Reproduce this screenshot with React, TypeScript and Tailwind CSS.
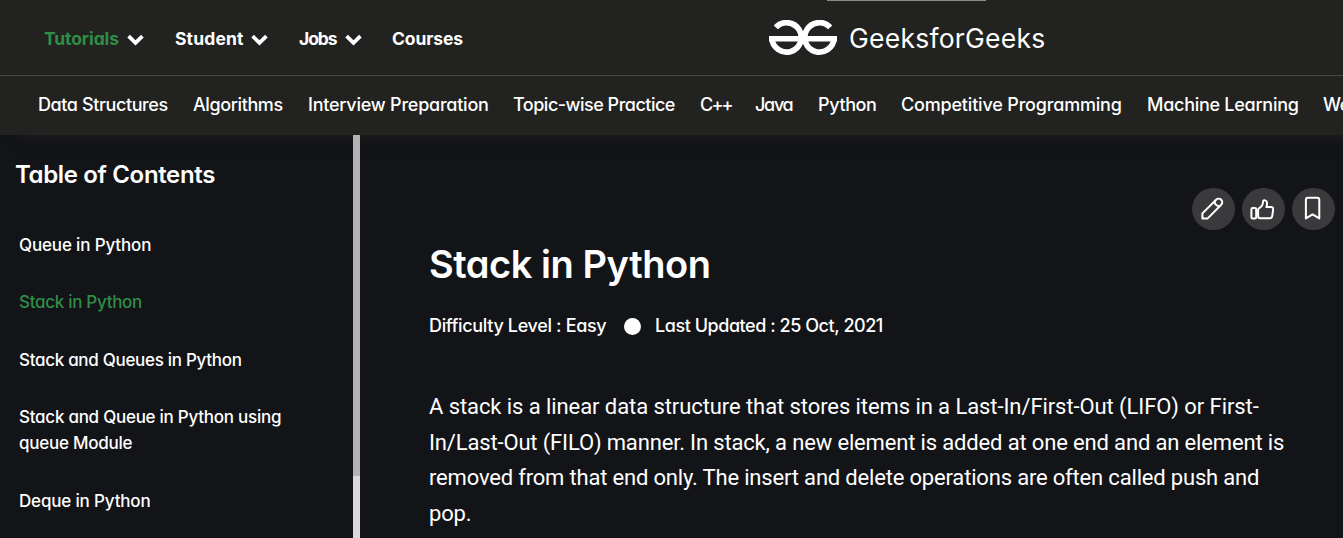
const menus = [
  { label: "Tutorials", slot: "w-[131px]", text: "w-[83px] tracking-[-0.1px] text-[#2f8d46]", arrow: true },
  { label: "Student", slot: "w-[124px]", text: "w-[76px] tracking-[0.15px]", arrow: true },
  { label: "Jobs", slot: "w-[93px]", text: "w-[46px] tracking-[-1.1px]", arrow: true },
  { label: "Courses", slot: "w-[90px]", text: "w-[77px] tracking-[-0.1px]", arrow: false },
];

const topics = [
  { label: "Data Structures", style: "w-[155px] tracking-[-0.4px]" },
  { label: "Algorithms", style: "w-[115px] tracking-[-0.4px]" },
  { label: "Interview Preparation", style: "w-[205px] tracking-[-0.23px]" },
  { label: "Topic-wise Practice", style: "w-[187px] tracking-[-0.5px]" },
  { label: "C++", style: "w-[55px] tracking-[-1.8px]" },
  { label: "Java", style: "w-[63px] tracking-[-1.3px]" },
  { label: "Python", style: "w-[83px] tracking-[-0.4px]" },
  { label: "Competitive Programming", style: "w-[246px] tracking-[-0.18px]" },
  { label: "Machine Learning", style: "w-[176px] tracking-[-0.27px]" },
  { label: "Web Development", style: "w-[177px] tracking-[-0.4px]" },
];

const contents = [
  { lines: ["Queue in Python"], style: "tracking-[-0.15px]" },
  { lines: ["Stack in Python"], style: "tracking-[-0.3px] text-[#2f8d46]" },
  { lines: ["Stack and Queues in Python"], style: "tracking-[-0.3px]" },
  { lines: ["Stack and Queue in Python using", "queue Module"], style: "tracking-[-0.26px]" },
  { lines: ["Deque in Python"], style: "pt-px tracking-[-0.17px]" },
];

const article = [
  { text: "A stack is a linear data structure that stores items in a Last-In/First-Out (LIFO) or First-", style: "tracking-[-0.08px]" },
  { text: "In/Last-Out (FILO) manner. In stack, a new element is added at one end and an element is", style: "tracking-[-0.155px]" },
  { text: "removed from that end only. The insert and delete operations are often called push and", style: "tracking-[-0.18px]" },
  { text: "pop.", style: "tracking-[-0.2px]" },
];

function Chevron() {
  return (
    <svg className="mt-0.5 h-3 w-[17px]" viewBox="0 0 17 12" fill="none" stroke="currentColor" strokeWidth="3.8">
      <path d="M1.6 2.2 8.5 8.8l6.9-6.6" />
    </svg>
  );
}

function Logo() {
  return (
    <svg className="-ml-px h-9 w-[68px]" viewBox="0 0 68 36" fill="none" stroke="white" strokeWidth="5.8">
      <path d="M6.8 7.4A14.7 14.7 0 1 1 2.9 18" />
      <path d="M61.2 7.4A14.7 14.7 0 1 0 65.1 18" />
      <path d="M0 18.7h31M37 18.7h31" strokeWidth="5.4" />
    </svg>
  );
}

function Pencil() {
  return (
    <svg className="mr-[3px] size-6" viewBox="0 0 24 24" fill="none" stroke="white" strokeWidth="2" strokeLinejoin="round">
      <path d="M2.4 21.6v-5.2L16.1 2.7a3.6 3.6 0 0 1 5.1 5.1L7.5 21.6z" />
      <path d="M14.6 4.2c.2 2.8 2 4.8 5.1 5.1" />
    </svg>
  );
}

function ThumbUp() {
  return (
    <svg className="mr-[3px] size-6" viewBox="0 0 24 24" fill="none" stroke="white" strokeWidth="2" strokeLinejoin="round">
      <rect x="1.4" y="11" width="4.8" height="10.6" rx="1.4" />
      <path d="M8.1 19.3v-6.7c0-.6.3-1 .8-1.3 2-1.1 3.4-2.4 3.8-4.2l.4-2.9c.2-1.3 3.6-1.4 3.9 1.4.2 1.5-.2 3.2-.6 4.5h4.7c1.3 0 2.3.9 2.1 2.2l-1 6.8c-.2 1.3-1.2 2.2-2.5 2.2h-9.6c-1.2 0-2-.8-2-2z" />
    </svg>
  );
}

function Bookmark() {
  return (
    <svg className="mr-px mb-0.5 size-6" viewBox="0 0 24 24" fill="none" stroke="white" strokeWidth="2" strokeLinejoin="round">
      <path d="M4.9 22.4V3.8c0-1.2.8-2 2-2h9.4c1.2 0 2 .8 2 2v18.6l-6.7-4z" />
    </svg>
  );
}

export default function App() {
  return (
    <div className="flex h-[538px] w-full flex-col overflow-hidden bg-[#131417] font-['Inter',sans-serif] text-white [font-feature-settings:'cv11']">
      <header className="relative h-[135px] shrink-0 bg-[#222221] shadow-[20px_0_14px_0_#222221]">
        <div className="absolute top-0 left-[827px] h-px w-[159px] bg-[#8b8b8a]" />
        <div className="flex h-[76px] items-center border-b border-[#484847] pl-11">
          <nav className="flex w-[726px] shrink-0 pt-0.5 text-[17.5px] leading-6 font-bold">
            {menus.map((menu) => (
              <a key={menu.label} className={`${menu.slot} flex shrink-0 items-center`}>
                <span className={`${menu.text} whitespace-nowrap`}>{menu.label}</span>
                {menu.arrow && <Chevron />}
              </a>
            ))}
          </nav>
          <a className="flex items-center gap-3">
            <Logo />
            <span className="text-[26.5px] leading-8 tracking-[0.25px]">GeeksforGeeks</span>
          </a>
        </div>
        <nav className="flex h-[57px] items-center overflow-hidden pl-[38px] text-[18px] font-medium">
          {topics.map((topic) => (
            <a key={topic.label} className={`${topic.style} shrink-0 whitespace-nowrap`}>
              {topic.label}
            </a>
          ))}
        </nav>
      </header>

      <div className="flex min-h-0 flex-1">
        <aside className="flex w-[360px] shrink-0 justify-between">
          <div className="pt-6 pl-[15px]">
            <h2 className="text-[24px] leading-8 font-semibold tracking-[-0.35px]">Table of Contents</h2>
            <ul className="flex flex-col gap-[31.4px] pt-[40.9px] pl-1 text-[17px] leading-[26px] font-medium">
              {contents.map((item) => (
                <li key={item.lines[0]} className={`${item.style} whitespace-nowrap`}>
                  {item.lines.map((line) => (
                    <div key={line}>{line}</div>
                  ))}
                </li>
              ))}
            </ul>
          </div>
          <div className="relative h-full w-[7px] bg-[#dadada]">
            <div className="h-[341px] bg-[#b3b3b3]" />
          </div>
        </aside>

        <main className="flex-1 pt-[53px]">
          <div className="flex justify-end gap-[7px] pr-2">
            <button className="flex h-[42px] w-[43px] items-center justify-center rounded-full bg-[#3a3a3c]"><Pencil /></button>
            <button className="flex h-[42px] w-[43px] items-center justify-center rounded-full bg-[#3a3a3c]"><ThumbUp /></button>
            <button className="flex h-[42px] w-[43px] items-center justify-center rounded-full bg-[#3a3a3c]"><Bookmark /></button>
          </div>
          <article className="pl-[69px]">
            <h1 className="pt-[9px] text-[38px] leading-[50px] font-semibold tracking-[-0.45px]">Stack in Python</h1>
            <div className="flex items-center pt-[25px] text-[18px] leading-6 font-medium">
              <span className="w-[195px] tracking-[-0.35px]">Difficulty Level : Easy</span>
              <span className="mr-[14px] size-[17px] rounded-full bg-white" />
              <span className="tracking-[-0.45px]">Last Updated : 25 Oct, 2021</span>
            </div>
            <div className="pt-[51px] font-['Roboto',sans-serif] text-[22px] leading-[35.7px]">
              {article.map((line) => (
                <p key={line.text} className={`${line.style} whitespace-nowrap`}>
                  {line.text}
                </p>
              ))}
            </div>
          </article>
        </main>
      </div>
    </div>
  );
}
